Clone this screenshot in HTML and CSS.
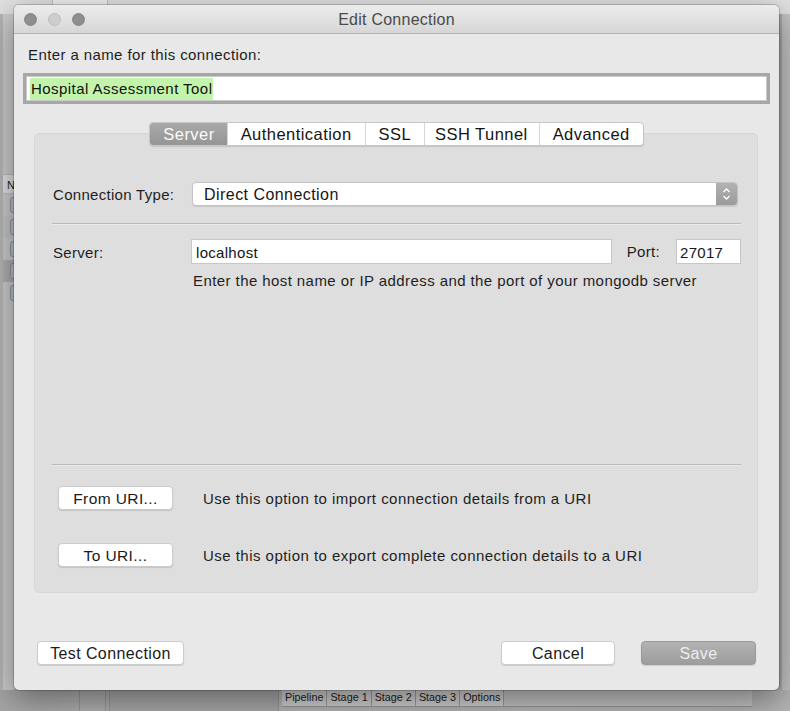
FILE: index.html
```html
<!DOCTYPE html>
<html>
<head>
<meta charset="utf-8">
<link rel="stylesheet" href="styles.css">
</head>
<body>
<div class="desktop">
  <div class="app">
    <div class="app-top"><div class="app-top-box"></div></div>
    <div class="app-left">
      <div class="app-left-head">N</div>
      <div class="app-left-row"><span class="app-pill"></span></div>
      <div class="app-left-row"><span class="app-pill"></span></div>
      <div class="app-left-row"><span class="app-pill"></span></div>
      <div class="app-left-row app-left-row-sel"><span class="app-pill"></span></div>
      <div class="app-left-row"><span class="app-pill"></span></div>
    </div>
    <div class="app-right"></div>
    <div class="app-bottom">
      <div class="app-col app-col-a"></div>
      <div class="app-col app-col-b"></div>
      <div class="app-tabs">
        <span class="app-tab">Pipeline</span><span class="app-tab">Stage 1</span><span class="app-tab">Stage 2</span><span class="app-tab">Stage 3</span><span class="app-tab">Options</span>
      </div>
    </div>
  </div>

  <div class="dialog">
    <div class="titlebar">
      <div class="lights">
        <span class="light light-dark"></span>
        <span class="light light-mid"></span>
        <span class="light light-dark"></span>
      </div>
      <div class="title">Edit Connection</div>
    </div>

    <div class="dialog-body">
      <div class="name-label">Enter a name for this connection:</div>
      <div class="name-input"><span class="name-sel">Hospital Assessment Tool</span></div>

      <div class="tabs">
        <span class="tab tab-active">Server</span>
        <span class="tab">Authentication</span>
        <span class="tab">SSL</span>
        <span class="tab tab-ssh">SSH Tunnel</span>
        <span class="tab">Advanced</span>
      </div>

      <div class="group">
        <div class="row row-type">
          <span class="row-label">Connection Type:</span>
          <div class="select">
            <span class="select-text">Direct Connection</span>
            <span class="stepper">
              <svg width="9" height="14" viewBox="0 0 9 14"><path d="M1.5 5 L4.5 2 L7.5 5" fill="none" stroke="#fff" stroke-width="1.3"/><path d="M1.5 9 L4.5 12 L7.5 9" fill="none" stroke="#fff" stroke-width="1.3"/></svg>
            </span>
          </div>
        </div>
        <div class="sep sep-top"></div>
        <div class="row row-server">
          <span class="row-label row-label-server">Server:</span>
          <div class="field field-host">localhost</div>
          <span class="port-label">Port:</span>
          <div class="field field-port">27017</div>
        </div>
        <div class="hint">Enter the host name or IP address and the port of your mongodb server</div>

        <div class="spacer"></div>

        <div class="sep sep-bottom"></div>
        <div class="uri-row">
          <span class="btn btn-uri">From URI...</span>
          <span class="uri-text">Use this option to import connection details from a URI</span>
        </div>
        <div class="uri-row uri-row-2">
          <span class="btn btn-uri">To URI...</span>
          <span class="uri-text">Use this option to export complete connection details to a URI</span>
        </div>
      </div>

      <div class="footer">
        <span class="btn btn-test">Test Connection</span>
        <div class="footer-right">
          <span class="btn btn-cancel">Cancel</span>
          <span class="btn btn-save">Save</span>
        </div>
      </div>
    </div>
  </div>
</div>
</body>
</html>
```
FILE: styles.css
```css
* { box-sizing: border-box; }
html, body { margin: 0; padding: 0; }
body {
  width: 790px;
  height: 711px;
  overflow: hidden;
  font-family: "Liberation Sans", Arial, sans-serif;
  color: #1e1e1e;
}
.desktop {
  position: relative;
  width: 790px;
  height: 711px;
  background: #b4b4b4;
  overflow: hidden;
}

/* ---------- background application ---------- */
.app { position: absolute; inset: 0; }
.app-top {
  position: absolute; left: 0; top: 0; width: 790px; height: 14px;
  background: #e2e2e2;
}
.app-top-box {
  position: absolute; left: 52px; top: 0; width: 56px; height: 14px;
  background: #f0f0f0;
  border-left: 1px solid #c6c6c6;
  border-right: 1px solid #c6c6c6;
}
.app-left {
  position: absolute; left: 0; top: 14px; width: 14px; height: 680px;
  background: #cdcdcd;
  border-left: 3px solid #b6b6b6;
  padding-top: 160px;
}
.app-left-head {
  height: 20px; font-size: 11px; line-height: 20px; padding-left: 4px; color: #222;
  border-top: 1px solid #bbb; border-bottom: 1px solid #c0c0c0; background: #e2e2e2;
}
.app-left-row { height: 22px; padding: 3px 0 0 7px; }
.app-left-row:nth-child(odd) { background: #c6c6c6; }
.app-left-row-sel { background: #b0b0b0 !important; }
.app-pill {
  display: block; width: 10px; height: 16px; border-radius: 3px;
  background: #b9c0c8; border: 1px solid #8d96a0;
}
.app-right {
  position: absolute; left: 779px; top: 14px; width: 11px; height: 697px;
  background: #c4c4c4;
  border-left: 3px solid #a9a9a9;
}
.app-bottom {
  position: absolute; left: 0; top: 690px; width: 790px; height: 21px;
  background: linear-gradient(to right, #a6a6a6 0px, #b1b1b1 80px, #b7b7b7 300px, #b5b5b5 100%);
}
.app-col { position: absolute; top: 0; height: 21px; border-left: 1px solid #9a9a9a; border-right: 1px solid #9a9a9a; }
.app-col-a { left: 79px; width: 27px; }
.app-col-b { left: 109px; width: 170px; background: #ababab; }
.app-tabs {
  position: absolute; left: 282px; top: 0; height: 17px; width: 470px;
  display: flex; background: #c6c6c6; border-bottom: 1px solid #999;
}
.app-tab {
  font-size: 10.8px; line-height: 15px; padding: 0 3px; color: #1c1c1c;
  border-right: 1px solid #9e9e9e; background: #d2d2d2;
}

/* ---------- dialog ---------- */
.dialog {
  position: absolute; left: 14px; top: 5px; width: 765px; height: 685px;
  background: #e8e8e8;
  border-radius: 5px;
  box-shadow: 0 0 0 1px rgba(0,0,0,0.18), 0 10px 34px rgba(0,0,0,0.45);
  display: flex; flex-direction: column;
  overflow: hidden;
}
.titlebar {
  position: relative;
  height: 29px;
  flex: none;
  background: linear-gradient(#ececec, #d6d6d6);
  border-bottom: 1px solid #b3b3b3;
  display: flex; align-items: center;
}
.lights { display: flex; gap: 11px; padding-left: 10px; }
.light { width: 13px; height: 13px; border-radius: 50%; display: block; }
.light-dark { background: #8e8e8e; border: 1px solid #858585; }
.light-mid { background: #cdcdcd; border: 1px solid #bfbfbf; }
.title {
  position: absolute; left: 0; right: 0; top: 0; bottom: 0;
  text-align: center; line-height: 29px;
  font-size: 16px; letter-spacing: 0.25px; color: #4a4a4a;
}

.dialog-body {
  flex: 1; display: flex; flex-direction: column;
  padding: 11px 0 25px;
}
.name-label {
  font-size: 15px; letter-spacing: 0.4px; line-height: 20px;
  padding-left: 14px; margin-bottom: 8px; color: #1e1e1e;
}
.name-input {
  margin: 0 9px; height: 31px;
  border: 3px solid #a7a7a7;
  background: #fff;
  padding: 2px 4px;
  box-shadow: inset 0 0 0 1px #c9c9c9;
}
.name-sel {
  display: inline-block; background: #c2f5ab;
  font-size: 15px; letter-spacing: 0.45px; line-height: 22px; padding: 0 1px; color: #111;
}

.tabs {
  align-self: center;
  display: flex;
  margin-top: 18px;
  height: 24px;
  background: #fff;
  border: 1px solid #c6c6c6;
  border-radius: 4px;
  box-shadow: 0 1px 1px rgba(0,0,0,0.12);
  position: relative; z-index: 2;
  overflow: hidden;
}
.tab {
  font-size: 16.5px; letter-spacing: 0.45px; line-height: 22px;
  padding: 0 13px; color: #141414;
  border-left: 1px solid #d6d6d6;
}
.tab:first-child { border-left: none; }
.tab-ssh { padding: 0 11px 0 10px; }
.tab-active {
  background: linear-gradient(#a9a9a9, #959595);
  color: #fbfbfb;
  padding: 0 12px 0 13px;
}

.group {
  margin: -13px 21px 0 20px;
  height: 460px;
  background: #dedede;
  border: 1px solid #d7d7d7;
  border-radius: 5px;
  display: flex; flex-direction: column;
  padding: 48px 16px 25px 18px;
}
.row { display: flex; align-items: center; }
.row-label {
  width: 139px; flex: none; font-size: 15px; letter-spacing: 0.3px; color: #1e1e1e;
  padding-top: 1px;
}
.select {
  flex: 1; height: 24px; margin-right: 3px;
  display: flex; align-items: center;
  background: #fff; border: 1px solid #c3c3c3; border-radius: 4px;
  box-shadow: 0 1px 1px rgba(0,0,0,0.1);
  overflow: hidden;
}
.select-text {
  flex: 1; padding: 2px 0 0 11px; font-size: 16px; letter-spacing: 0.45px; color: #161616;
}
.stepper {
  width: 21px; height: 24px; flex: none;
  background: linear-gradient(#b3b3b3, #999);
  display: flex; align-items: center; justify-content: center;
}
.sep { height: 2px; border-top: 1px solid #b9b9b9; border-bottom: 1px solid #ececec; }
.sep-top { margin: 17px 0 14px -1px; }
.row-label-server { width: 138px; }
.field {
  height: 25px; background: #fff; border: 1px solid #c7c7c7;
  font-size: 15px; letter-spacing: 0.3px; line-height: 25px; padding-left: 4px; color: #161616;
}
.field-host { flex: 1; }
.port-label { margin: 0 16px 0 15px; font-size: 15px; letter-spacing: 0.3px; color: #1e1e1e; }
.field-port { width: 65px; padding-left: 3px; }
.hint {
  margin-top: 8px; padding-left: 140px;
  font-size: 15px; letter-spacing: 0.42px; line-height: 18px; color: #1e1e1e;
}
.spacer { flex: 1; }
.sep-bottom { margin: 0 0 20px -1px; }
.uri-row { display: flex; align-items: center; padding-left: 5px; }
.uri-row-2 { margin-top: 33px; }
.uri-text { margin-left: 30px; font-size: 15px; letter-spacing: 0.47px; color: #1e1e1e; }

.btn {
  display: inline-block; height: 24px; line-height: 23px; text-align: center;
  background: #fff; border: 1px solid #cbcbcb; border-radius: 4px;
  box-shadow: 0 1px 1px rgba(0,0,0,0.12);
  font-size: 16px; letter-spacing: 0.4px; color: #1a1a1a;
}
.btn-uri { width: 115px; font-size: 15.5px; }
.footer {
  margin-top: auto;
  display: flex; align-items: center; justify-content: space-between;
  padding: 0 23px;
}
.btn-test { width: 147px; }
.footer-right { display: flex; gap: 26px; }
.btn-cancel { width: 114px; }
.btn-save {
  width: 115px;
  background: linear-gradient(#b2b2b2, #9d9d9d);
  border-color: #9a9a9a;
  color: #ededed;
}
```
